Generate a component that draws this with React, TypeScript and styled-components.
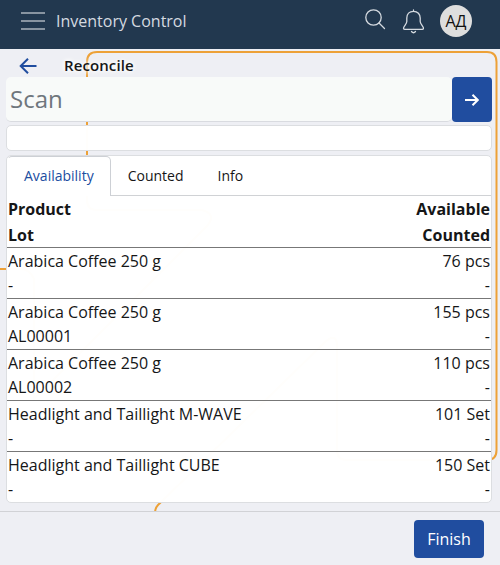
import React from "react";
import styled, { createGlobalStyle } from "styled-components";

const GlobalStyle = createGlobalStyle`
  * { box-sizing: border-box; }
  body {
    margin: 0;
    background: #eeeff4;
    color: #151617;
    font-family: "Open Sans", "Noto Sans", sans-serif;
    font-size: 16px;
  }
  button, input { font-family: inherit; }
`;

const Page = styled.div`
  position: relative;
  isolation: isolate;
  display: flex;
  flex-direction: column;
  height: 565px;
  overflow: hidden;
`;

const Backdrop = styled.svg`
  position: absolute;
  inset: 0;
  z-index: -1;
`;

const TopBar = styled.header`
  display: flex;
  align-items: center;
  height: 49px;
  padding: 0 28px 7px 21px;
  background: #22384f;
  color: #d5dae0;
`;

const MenuButton = styled.button`
  display: flex;
  padding: 0;
  border: 0;
  background: none;
`;

const AppName = styled.span`
  flex: 1;
  margin-left: 11px;
  font-size: 16px;
  line-height: 24px;
`;

const Tools = styled.div`
  display: flex;
  align-items: center;
`;

const SearchIcon = styled.svg`
  margin: 0 -1px 2px 0;
`;

const Avatar = styled.div`
  display: flex;
  align-items: center;
  justify-content: center;
  width: 32px;
  height: 32px;
  margin-left: 16px;
  border-radius: 50%;
  background: #dedede;
  color: #111;
  font-size: 16px;
`;

const Content = styled.main`
  flex: 1;
  padding: 0 8px 0 6px;
`;

const TitleRow = styled.div`
  display: flex;
  align-items: center;
  height: 28px;
  padding: 5px 0 0 13px;
`;

const Title = styled.h1`
  margin: 0 0 2px 27px;
  font-size: 15px;
  font-weight: 600;
  letter-spacing: 0.1px;
  line-height: 20px;
  text-shadow: 0 0 4px #fff, 0 0 5px #fff, 0 0 8px #fff;
`;

const ScanRow = styled.div`
  display: flex;
  height: 45px;
`;

const ScanInput = styled.input`
  flex: 1;
  min-width: 0;
  padding: 0 4px 2px;
  border: 0;
  border-bottom: 1px solid #d9dbe0;
  border-radius: 5px;
  outline: 0;
  background: #f8faf9;
  font-size: 24px;
  &::placeholder { color: #6f767d; opacity: 1; }
`;

const PrimaryButton = styled.button<{ $wide?: boolean }>`
  display: flex;
  align-items: center;
  justify-content: center;
  width: ${(p) => (p.$wide ? 70 : 40)}px;
  height: ${(p) => (p.$wide ? 38 : 45)}px;
  padding: 0;
  border: 0;
  border-radius: 4px;
  background: #204d9f;
  color: #fff;
  font-size: 16px;
`;

const Panel = styled.section`
  border: 1px solid #dcdee1;
  border-radius: 5px;
  background: rgba(255, 255, 255, 0.985);
`;

const MessagePanel = styled(Panel)`
  height: 26px;
  margin: 3px 0 4px;
`;

const ListPanel = styled(Panel)`
  height: 348px;
`;

const Tabs = styled.div`
  display: flex;
  height: 40px;
  border-bottom: 1px solid #d0d2d5;
`;

const Tab = styled.button<{ $active?: boolean }>`
  height: 40px;
  padding: 0 16px 2px;
  border: 1px solid ${(p) => (p.$active ? "#cdd0d5" : "transparent")};
  border-bottom: 0;
  border-left-color: transparent;
  border-radius: 5px 5px 0 0;
  background: ${(p) => (p.$active ? "#fff" : "transparent")};
  color: ${(p) => (p.$active ? "#204d9f" : "#151617")};
  font-size: 14px;
`;

const Table = styled.table`
  width: 100%;
  border-spacing: 0;
`;

const HeadCell = styled.th<{ $end?: boolean }>`
  padding: 0 1px;
  font-weight: 700;
  line-height: 26px;
  text-align: ${(p) => (p.$end ? "right" : "left")};
`;

const HeadLine = styled.div`
  &:last-child { height: 25px; }
`;

const Cell = styled.td<{ $end?: boolean }>`
  padding: 1px;
  border-top: 1px solid #777;
  line-height: 24px;
  text-align: ${(p) => (p.$end ? "right" : "left")};
`;

const Line = styled.div``;

const Footer = styled.footer`
  display: flex;
  justify-content: flex-end;
  height: 54px;
  padding: 8px 16px;
  border-top: 1px solid #d1d2d6;
  background: #eeeff4;
`;

const entries = [
  { product: "Arabica Coffee 250 g", lot: "-", available: "76 pcs" },
  { product: "Arabica Coffee 250 g", lot: "AL00001", available: "155 pcs" },
  { product: "Arabica Coffee 250 g", lot: "AL00002", available: "110 pcs" },
  { product: "Headlight and Taillight M-WAVE", lot: "-", available: "101 Set" },
  { product: "Headlight and Taillight CUBE", lot: "-", available: "150 Set" },
];

export default function App() {
  return (
    <Page>
      <GlobalStyle />
      <Backdrop width="500" height="565" fill="none" stroke="#eda137" strokeWidth="2">
        <path d="M97 52H487Q496.500 52 496.500 62V450Q496.500 460 487 460H347Q337 460 337 450V346Q337 332 325 342L158 505Q155 508 155 513" />
        <path d="M97 52Q87 52 87 62V200Q87 210 97 210H202Q217 214 207 226L34 399V279Q30 269 20 269H0" />
      </Backdrop>
      <TopBar>
        <MenuButton aria-label="Menu">
          <svg width="24" height="20" stroke="#aab3bd" strokeWidth="1.5">
            <path d="M0 2H24M0 10H24M0 18H24" />
          </svg>
        </MenuButton>
        <AppName>Inventory Control</AppName>
        <Tools>
          <SearchIcon width="21" height="22" viewBox="0 0 21 22" fill="none" stroke="#d5dae0" strokeWidth="1.3" strokeLinecap="round">
            <circle cx="8.5" cy="8.5" r="7.7" />
            <path d="M14 14L19.5 19.5" />
          </SearchIcon>
          <svg width="39" height="25" viewBox="-17 0 39 25" fill="none" stroke="#d5dae0" strokeWidth="1.3" strokeLinecap="round" strokeLinejoin="round">
            <path d="M11.5 1V2.3M11.5 2.3C7.3 2.3 4.8 5.2 4.8 9V12.5C4.8 15 1.5 17.3 1.5 19.2Q1.5 20.3 2.7 20.3H20.3Q21.5 20.3 21.5 19.2C21.5 17.3 18.2 15 18.2 12.5V9C18.2 5.2 15.7 2.3 11.5 2.3Z" />
            <path d="M9.5 22.5Q11.5 25 13.5 22.5" />
          </svg>
          <Avatar>АД</Avatar>
        </Tools>
      </TopBar>
      <Content>
        <TitleRow>
          <svg width="18" height="16" fill="none" stroke="#204d9f" strokeWidth="2">
            <path d="M9 .7L1.7 8L9 15.3M1.7 8H17.5" />
          </svg>
          <Title>Reconcile</Title>
        </TitleRow>
        <ScanRow>
          <ScanInput placeholder="Scan" />
          <PrimaryButton aria-label="Submit">
            <svg width="14" height="12" fill="none" stroke="#fff" strokeWidth="2">
              <path d="M0 6H12.5M7.5 .7L12.8 6L7.5 11.3" />
            </svg>
          </PrimaryButton>
        </ScanRow>
        <MessagePanel />
        <ListPanel>
          <Tabs>
            <Tab $active>Availability</Tab>
            <Tab>Counted</Tab>
            <Tab>Info</Tab>
          </Tabs>
          <Table>
            <thead>
              <tr>
                <HeadCell><HeadLine>Product</HeadLine><HeadLine>Lot</HeadLine></HeadCell>
                <HeadCell $end><HeadLine>Available</HeadLine><HeadLine>Counted</HeadLine></HeadCell>
              </tr>
            </thead>
            <tbody>
              {entries.map((e, i) => (
                <tr key={i}>
                  <Cell><Line>{e.product}</Line><Line>{e.lot}</Line></Cell>
                  <Cell $end><Line>{e.available}</Line><Line>-</Line></Cell>
                </tr>
              ))}
            </tbody>
          </Table>
        </ListPanel>
      </Content>
      <Footer>
        <PrimaryButton $wide>Finish</PrimaryButton>
      </Footer>
    </Page>
  );
}
